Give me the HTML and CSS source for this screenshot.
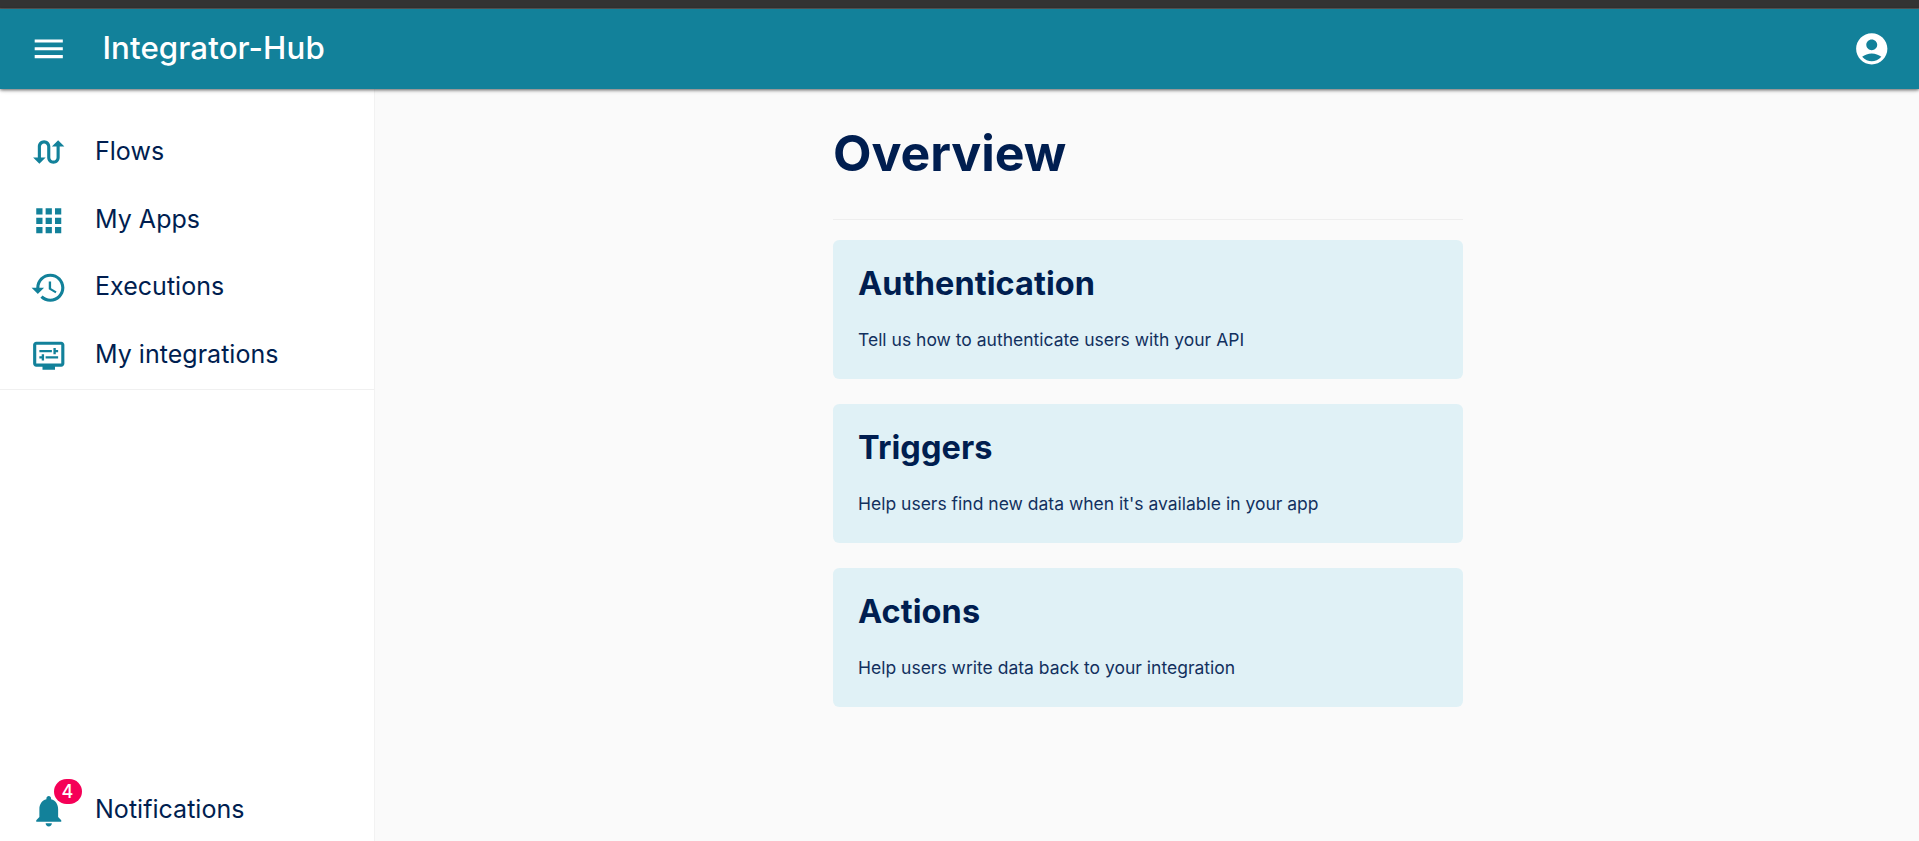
FILE: index.html
```html
<!DOCTYPE html>
<html lang="en">
<head>
<meta charset="utf-8">
<title>Integrator-Hub</title>
<link rel="stylesheet" href="styles.css">
</head>
<body>
<div class="app">
  <div class="window-edge"></div>
  <header class="app-bar">
    <button class="icon-button" aria-label="Menu"><svg class="icon" viewBox="0 0 24 24"><path d="M3 18h18v-2H3v2zm0-5h18v-2H3v2zm0-7v2h18V6H3z"/></svg></button>
    <div class="brand">Integrator-Hub</div>
    <button class="icon-button account" aria-label="Account"><svg class="icon" viewBox="0 0 24 24"><path d="M12 2C6.48 2 2 6.48 2 12s4.48 10 10 10 10-4.48 10-10S17.52 2 12 2zm0 4c1.93 0 3.5 1.57 3.5 3.5S13.93 13 12 13s-3.5-1.57-3.5-3.5S10.07 6 12 6zm0 14c-2.03 0-4.43-.82-6.14-2.88C7.55 15.8 9.68 15 12 15s4.45.8 6.14 2.12C16.43 19.18 14.03 20 12 20z"/></svg></button>
  </header>
  <div class="body">
    <nav class="sidebar">
      <div class="nav-group">
        <a class="nav-item"><svg class="icon" viewBox="0 0 24 24"><path d="M18 4l-4 4h3v7c0 1.1-.9 2-2 2s-2-.9-2-2V8c0-2.21-1.79-4-4-4S5 5.79 5 8v7H2l4 4 4-4H7V8c0-1.1.9-2 2-2s2 .9 2 2v7c0 2.21 1.79 4 4 4s4-1.79 4-4V8h3l-4-4z"/></svg><span class="label">Flows</span></a>
        <a class="nav-item"><svg class="icon" viewBox="0 0 24 24"><path d="M4 8h4V4H4v4zm6 12h4v-4h-4v4zm-6 0h4v-4H4v4zm0-6h4v-4H4v4zm6 0h4v-4h-4v4zm6-10v4h4V4h-4zm-6 4h4V4h-4v4zm6 6h4v-4h-4v4zm0 6h4v-4h-4v4z"/></svg><span class="label">My Apps</span></a>
        <a class="nav-item"><svg class="icon" viewBox="0 0 24 24"><path d="M13 3c-4.97 0-9 4.03-9 9H1l3.89 3.89.07.14L9 12H6c0-3.87 3.13-7 7-7s7 3.13 7 7-3.13 7-7 7c-1.93 0-3.68-.79-4.94-2.06l-1.42 1.42C8.27 19.99 10.51 21 13 21c4.97 0 9-4.03 9-9s-4.03-9-9-9zm-1 5v5l4.28 2.54.72-1.21-3.5-2.08V8H12z"/></svg><span class="label">Executions</span></a>
        <a class="nav-item"><svg class="icon" viewBox="0 0 24 24"><path d="M20 3H4c-1.11 0-2 .89-2 2v12c0 1.1.89 2 2 2h4v2h8v-2h4c1.1 0 2-.9 2-2V5c0-1.11-.9-2-2-2zm0 14H4V5h16v12z"/><path d="M6 8.25h8v1.5H6zM16.5 9.75H18v-1.5h-1.5V7H15v4h1.5zM10 12.25h8v1.5h-8zM7.5 15H9v-4H7.5v1.25H6v1.5h1.5z"/></svg><span class="label">My integrations</span></a>
      </div>
      <a class="nav-item notifications"><span class="badge-anchor"><svg class="icon" viewBox="0 0 24 24"><path d="M12 22c1.1 0 2-.9 2-2h-4c0 1.1.89 2 2 2zm6-6v-5c0-3.07-1.64-5.64-4.5-6.32V4c0-.83-.67-1.5-1.5-1.5s-1.5.67-1.5 1.5v.68C7.63 5.36 6 7.92 6 11v5l-2 2v1h16v-1l-2-2z"/></svg><span class="badge">4</span></span><span class="label">Notifications</span></a>
    </nav>
    <main class="content">
      <div class="overview">
        <h1 class="page-title">Overview</h1>
        <section class="card"><h2 class="card-title">Authentication</h2><p class="card-text">Tell us how to authenticate users with your API</p></section>
        <section class="card"><h2 class="card-title">Triggers</h2><p class="card-text">Help users find new data when it's available in your app</p></section>
        <section class="card"><h2 class="card-title">Actions</h2><p class="card-text">Help users write data back to your integration</p></section>
      </div>
    </main>
  </div>
</div>
</body>
</html>
```

FILE: styles.css
```css
* { box-sizing: border-box; }
body {
  margin: 0;
  font-family: Inter, "Liberation Sans", sans-serif;
  color: #001e50;
  background: #fafafa;
}
.app {
  display: flex;
  flex-direction: column;
  height: 841px;
  overflow: hidden;
}
.window-edge {
  flex: none;
  height: 9px;
  background: #333;
  border-bottom: 1px solid #595959;
}
.app-bar {
  flex: none;
  z-index: 1;
  display: flex;
  align-items: center;
  height: 80px;
  padding: 0 29px 0 30px;
  color: #fff;
  background: #12819a;
  box-shadow: 0 2px 5px -1px rgba(0,0,0,.2), 0 1px 3px rgba(0,0,0,.5);
}
.icon-button {
  display: flex;
  padding: 0;
  border: 0;
  background: none;
  color: inherit;
}
.icon {
  display: block;
  flex: none;
  width: 37.5px;
  height: 37.5px;
  fill: currentColor;
}
.brand {
  margin-left: 35px;
  padding-bottom: 2px;
  font-size: 31.25px;
  font-weight: 500;
  line-height: 40px;
  letter-spacing: .003em;
}
.account { margin-left: auto; }
.body {
  flex: 1;
  display: flex;
  min-height: 0;
}
.sidebar {
  flex: none;
  display: flex;
  flex-direction: column;
  justify-content: space-between;
  width: 375px;
  padding-top: 30px;
  background: #fff;
  border-right: 1px solid #f2f2f2;
}
.nav-group { border-bottom: 1px solid #f0f0f0; }
.nav-item {
  display: flex;
  align-items: center;
  gap: 27.5px;
  height: 67.5px;
  padding-left: 30px;
  font-size: 25px;
  font-weight: 400;
  line-height: 30px;
  letter-spacing: .001em;
}
.label { padding-bottom: 3px; }
.nav-item .icon { color: #12819a; }
.notifications { margin-bottom: -3px; }
.badge-anchor { position: relative; }
.badge {
  position: absolute;
  left: 23.5px;
  top: -12.5px;
  width: 28px;
  height: 25px;
  border-radius: 12.5px;
  background: #f50057;
  color: #fff;
  font-size: 18px;
  font-weight: 500;
  line-height: 25px;
  text-align: center;
}
.content { flex: 1; }
.overview {
  display: flex;
  flex-direction: column;
  gap: 25px;
  width: 630px;
  margin-left: 458px;
}
.page-title {
  height: 131px;
  margin: 0 0 -5px;
  padding-top: 34px;
  border-bottom: 1px solid #eee;
  font-size: 50px;
  font-weight: 700;
  line-height: 60px;
  letter-spacing: -.001em;
}
.card {
  height: 139px;
  padding: 25px;
  border-radius: 6.25px;
  background: #e0f1f6;
}
.card-title {
  margin: 0;
  font-size: 32.5px;
  font-weight: 700;
  line-height: 38px;
  letter-spacing: .002em;
}
.card-text {
  margin: 24px 0 0;
  color: #12305e;
  font-size: 17.5px;
  font-weight: 400;
  line-height: 25px;
}
```
